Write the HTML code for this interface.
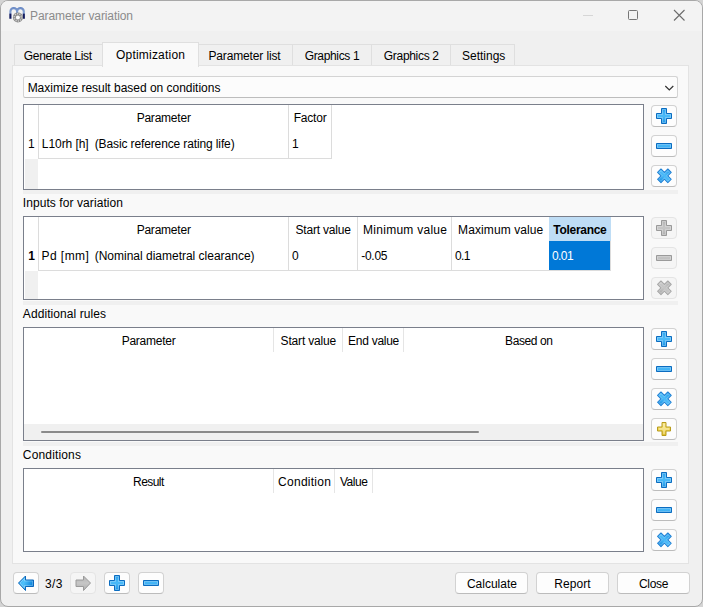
<!DOCTYPE html>
<html>
<head>
<meta charset="utf-8">
<title>Parameter variation</title>
<style>
html,body{margin:0;padding:0;}
body{width:703px;height:607px;overflow:hidden;background:#d4d4d4;position:relative;
 font-family:"Liberation Sans",sans-serif;font-size:12px;color:#000;}
*{box-sizing:border-box;}
.abs{position:absolute;}
#win{position:absolute;left:0;top:0;width:703px;height:607px;background:#f0f0f0;border:1px solid #a8a8a8;border-radius:8px;overflow:hidden;}
#tbar{position:absolute;left:0;top:0;width:701px;height:30px;background:#f3f3f3;}
.t{position:absolute;white-space:nowrap;line-height:14px;height:14px;}
.tab{position:absolute;top:43px;height:23px;background:#f0f0f0;border:1px solid #dfdfdf;border-bottom:none;border-left:none;}
.pane{position:absolute;left:11px;top:64px;width:677px;height:499px;background:#f9f9f9;border:1px solid #e3e3e3;}
.tbl{position:absolute;left:22px;width:621px;background:#fff;border:1px solid #7a7f8b;}
.strip{position:absolute;left:22px;width:655px;height:4px;background:#f0f0f0;}
.btn{position:absolute;width:26px;height:22px;background:#fdfdfd;border:1px solid #d2d2d2;border-bottom-color:#bcbcbc;border-radius:4px;}
.btn.dis{background:#f5f5f5;border-color:#e4e4e4;}
.btn svg{position:absolute;left:3px;top:1px;}
.pbtn{position:absolute;top:571px;height:22px;background:#fdfdfd;border:1px solid #d2d2d2;border-bottom-color:#bcbcbc;border-radius:4px;}
.vl{position:absolute;width:1px;background:#dcdcdc;}
.hl{position:absolute;height:1px;background:#dcdcdc;}
</style>
</head>
<body>
<svg width="0" height="0" style="position:absolute">
<defs>
<linearGradient id="gb" x1="0" y1="0" x2="0" y2="1"><stop offset="0" stop-color="#2a9fec"/><stop offset="0.5" stop-color="#4bbbf9"/><stop offset="1" stop-color="#1b92e4"/></linearGradient>
<linearGradient id="gbh" x1="0" y1="0" x2="1" y2="0.3"><stop offset="0" stop-color="#3bb0f5"/><stop offset="0.45" stop-color="#4fc0fb"/><stop offset="1" stop-color="#0f86dc"/></linearGradient>
<linearGradient id="gg" x1="0" y1="0" x2="0" y2="1"><stop offset="0" stop-color="#b4b4b4"/><stop offset="0.5" stop-color="#c6c6c6"/><stop offset="1" stop-color="#aeaeae"/></linearGradient>
<linearGradient id="gy" x1="0" y1="0" x2="0" y2="1"><stop offset="0.1" stop-color="#f6e384"/><stop offset="0.5" stop-color="#f1d85c"/><stop offset="0.9" stop-color="#e2c235"/></linearGradient>
<g id="iplus"><path d="M6.5 1.5h5v5h5v5h-5v5h-5v-5h-5v-5h5z" stroke-linejoin="round"/><path d="M7.5 2.5h3v5h5v3h-5v5h-3v-5h-5v-3h5z" fill="none" stroke="#fff" stroke-opacity="0.28"/></g>
<g id="iplusy"><path d="M7 2.5h4v4.5h4.5v4h-4.5v4.5h-4v-4.5h-4.5v-4h4.5z" stroke-linejoin="round"/><path d="M9 4v10M4 9h10" fill="none" stroke="#fff" stroke-opacity="0.3" stroke-width="2"/></g>
<g id="iminus"><path d="M1.5 6.5h15v5h-15z" stroke-linejoin="round"/><path d="M2.5 7.5h13v3h-13z" fill="none" stroke="#fff" stroke-opacity="0.28"/></g>
<g id="ix" transform="translate(9.4 8.8) rotate(45) scale(0.97) translate(-9 -9)"><path d="M6.5 1.5h5v5h5v5h-5v5h-5v-5h-5v-5h5z" stroke-linejoin="round"/><path d="M7.5 2.5h3v5h5v3h-5v5h-3v-5h-5v-3h5z" fill="none" stroke="#fff" stroke-opacity="0.2"/></g>
</defs>
</svg>

<div id="win">
 <div id="tbar"></div>
 <!-- app icon -->
 <svg class="abs" style="left:-1px;top:-1px" width="40" height="32" viewBox="0 0 40 32">
  <defs><linearGradient id="gm" gradientUnits="userSpaceOnUse" x1="0" y1="7" x2="0" y2="19"><stop offset="0" stop-color="#6888c4"/><stop offset="0.53" stop-color="#86a4d4"/><stop offset="0.56" stop-color="#131c62"/><stop offset="1" stop-color="#0e175a"/></linearGradient></defs>
  <path d="M10.4 18.7V11.5a3.35 3.35 0 0 1 6.7 0V14M17.1 11.5a3.35 3.35 0 0 1 6.7 0V18.7" fill="none" stroke="url(#gm)" stroke-width="2.15"/>
  <circle cx="17.9" cy="17.4" r="5" fill="#8a8a8a"/>
  <circle cx="17.9" cy="17.4" r="3.6" fill="none" stroke="#d0d0d0" stroke-width="1.6" stroke-dasharray="1.1 1.15"/>
  <circle cx="17.9" cy="17.4" r="2" fill="#fdfdfd"/>
 </svg>
 <div class="t" style="left:29.05px;top:8px;color:#8b8b8b;letter-spacing:-0.098px" id="title">Parameter variation</div>
 <!-- caption buttons -->
 <div class="abs" style="left:582px;top:14px;width:10px;height:1px;background:#d6d6d6"></div>
 <div class="abs" style="left:627px;top:9px;width:10px;height:10px;border:1px solid #767676;border-radius:1.5px"></div>
 <svg class="abs" style="left:672px;top:8px" width="13" height="13" viewBox="0 0 13 13"><path d="M1 1l10.5 10.5M11.5 1L1 11.5" stroke="#6c6c6c" stroke-width="1.1" fill="none"/></svg>

 <!-- tabs -->
 <div class="tab" style="left:13px;width:89px;border-left:1px solid #dfdfdf"></div>
 <div class="tab" style="left:197px;width:95px"></div>
 <div class="tab" style="left:292px;width:79px"></div>
 <div class="tab" style="left:371px;width:79px"></div>
 <div class="tab" style="left:450px;width:64px"></div>
 <div class="pane"></div>
 <div class="tab" style="left:101px;top:41px;width:97px;height:25px;background:#f9f9f9;border-left:1px solid #dfdfdf"></div>
 <div class="t" style="left:22.85px;top:48px;letter-spacing:-0.319px" id="tb1">Generate List</div>
 <div class="t" style="left:114.98px;top:47px;letter-spacing:0.21px" id="tb2">Optimization</div>
 <div class="t" style="left:207.39px;top:48px;letter-spacing:-0.132px" id="tb3">Parameter list</div>
 <div class="t" style="left:303.68px;top:48px;letter-spacing:-0.334px" id="tb4">Graphics 1</div>
 <div class="t" style="left:382.85px;top:48px;letter-spacing:-0.315px" id="tb5">Graphics 2</div>
 <div class="t" style="left:461.07px;top:48px;letter-spacing:-0.013px" id="tb6">Settings</div>

 <!-- combo -->
 <div class="abs" style="left:22px;top:75px;width:655px;height:22px;background:#fcfcfc;border:1px solid #d4d4d4;border-bottom-color:#bdbdbd;border-radius:2.5px"></div>
 <div class="t" style="left:26.64px;top:80px;letter-spacing:-0.02px" id="cb">Maximize result based on conditions</div>
 <svg class="abs" style="left:663px;top:84px" width="11" height="7" viewBox="0 0 11 7"><path d="M1.3 1l4 4l4-4" stroke="#333" stroke-width="1.2" fill="none"/></svg>

 <!-- table 1 -->
 <div class="tbl" style="top:103px;height:86px">
  <div class="abs" style="left:1px;top:54px;width:13px;height:30px;background:#f0f0f0"></div>
  <div class="vl" style="left:14px;top:0;height:54px"></div>
  <div class="vl" style="left:264px;top:0;height:54px"></div>
  <div class="vl" style="left:307px;top:0;height:54px"></div>
  <div class="hl" style="left:14px;top:53px;width:294px"></div>
 </div>
 <div class="t" style="left:135.64px;top:110px;letter-spacing:-0.219px" id="h1a">Parameter</div>
 <div class="t" style="left:292.64px;top:110px;letter-spacing:-0.2px" id="h1b">Factor</div>
 <div class="t" style="left:27px;top:136px" id="r1n">1</div>
 <div class="t" style="left:40.82px;top:136px;letter-spacing:-0.059px" id="r1a">L10rh [h]</div>
 <div class="t" style="left:93.72px;top:136px;letter-spacing:-0.124px" id="r1c">(Basic reference rating life)</div>
 <div class="t" style="left:291px;top:136px" id="r1b">1</div>
 <div class="strip" style="top:189px"></div>
 <div class="btn" style="left:650px;top:104px"><svg width="18" height="18"><use href="#iplus" fill="url(#gb)" stroke="#0b6cc0"/></svg></div>
 <div class="btn" style="left:650px;top:134px"><svg width="18" height="18"><use href="#iminus" fill="url(#gb)" stroke="#0b6cc0"/></svg></div>
 <div class="btn" style="left:650px;top:164px"><svg width="18" height="18"><use href="#ix" fill="url(#gb)" stroke="#2080d4"/></svg></div>

 <!-- table 2 -->
 <div class="t" style="left:21.79px;top:195px;letter-spacing:0.078px" id="l2">Inputs for variation</div>
 <div class="tbl" style="top:215px;height:84px">
  <div class="abs" style="left:1px;top:54px;width:13px;height:28px;background:#f0f0f0"></div>
  <div class="abs" style="left:525px;top:0;width:62px;height:24px;background:#bfddf5"></div>
  <div class="abs" style="left:525px;top:24px;width:61px;height:29px;background:#0078d7"></div>
  <div class="vl" style="left:586px;top:24px;height:30px"></div>
  <div class="vl" style="left:14px;top:0;height:54px"></div>
  <div class="vl" style="left:264px;top:0;height:54px"></div>
  <div class="vl" style="left:333px;top:0;height:54px"></div>
  <div class="vl" style="left:427px;top:0;height:54px"></div>
  <div class="hl" style="left:14px;top:53px;width:573px"></div>
 </div>
 <div class="t" style="left:135.64px;top:222px;letter-spacing:-0.219px" id="h2a">Parameter</div>
 <div class="t" style="left:294.55px;top:222px;letter-spacing:-0.194px" id="h2b">Start value</div>
 <div class="t" style="left:362.12px;top:222px;letter-spacing:0.26px" id="h2c">Minimum value</div>
 <div class="t" style="left:457.12px;top:222px;letter-spacing:0.092px" id="h2d">Maximum value</div>
 <div class="t" style="left:552.29px;top:222px;font-weight:bold;letter-spacing:-0.287px" id="h2e">Tolerance</div>
 <div class="t" style="left:27.2px;top:248px;font-weight:bold" id="r2n">1</div>
 <div class="t" style="left:40.43px;top:248px;letter-spacing:0.469px" id="r2a">Pd [mm]</div>
 <div class="t" style="left:93.72px;top:248px;letter-spacing:-0.008px" id="r2f">(Nominal diametral clearance)</div>
 <div class="t" style="left:290.9px;top:248px" id="r2b">0</div>
 <div class="t" style="left:360.21px;top:248px;letter-spacing:-0.254px" id="r2c">-0.05</div>
 <div class="t" style="left:454px;top:248px;letter-spacing:-0.6px" id="r2d">0.1</div>
 <div class="t" style="left:551px;top:248px;color:#fff;letter-spacing:-0.6px" id="r2e">0.01</div>
 <div class="strip" style="top:300px"></div>
 <div class="btn dis" style="left:650px;top:216px"><svg width="18" height="18"><use href="#iplus" fill="url(#gg)" stroke="#9a9a9a"/></svg></div>
 <div class="btn dis" style="left:650px;top:246px"><svg width="18" height="18"><use href="#iminus" fill="url(#gg)" stroke="#9a9a9a"/></svg></div>
 <div class="btn dis" style="left:650px;top:276px"><svg width="18" height="18"><use href="#ix" fill="url(#gg)" stroke="#a6a6a6"/></svg></div>

 <!-- table 3 -->
 <div class="t" style="left:21.85px;top:306px;letter-spacing:0.07px" id="l3">Additional rules</div>
 <div class="tbl" style="top:326px;height:114px">
  <div class="abs" style="left:0;top:96px;width:619px;height:16px;background:#f0f0f0"></div>
  <div class="abs" style="left:17px;top:103px;width:438px;height:2px;background:#8a8a8a;border-radius:1px"></div>
  <div class="vl" style="left:249px;top:0;height:24px;background:#e5e5e5"></div>
  <div class="vl" style="left:318px;top:0;height:24px;background:#e5e5e5"></div>
  <div class="vl" style="left:379px;top:0;height:24px;background:#e5e5e5"></div>
 </div>
 <div class="t" style="left:120.64px;top:333px;letter-spacing:-0.25px" id="h3a">Parameter</div>
 <div class="t" style="left:279.55px;top:333px;letter-spacing:-0.163px" id="h3b">Start value</div>
 <div class="t" style="left:347.12px;top:333px;letter-spacing:-0.275px" id="h3c">End value</div>
 <div class="t" style="left:504.12px;top:333px;letter-spacing:-0.406px" id="h3d">Based on</div>
 <div class="strip" style="top:441px"></div>
 <div class="btn" style="left:650px;top:327px"><svg width="18" height="18"><use href="#iplus" fill="url(#gb)" stroke="#0b6cc0"/></svg></div>
 <div class="btn" style="left:650px;top:357px"><svg width="18" height="18"><use href="#iminus" fill="url(#gb)" stroke="#0b6cc0"/></svg></div>
 <div class="btn" style="left:650px;top:387px"><svg width="18" height="18"><use href="#ix" fill="url(#gb)" stroke="#2080d4"/></svg></div>
 <div class="btn" style="left:650px;top:417px"><svg width="18" height="18"><use href="#iplusy" fill="url(#gy)" stroke="#b89c1c"/></svg></div>

 <!-- table 4 -->
 <div class="t" style="left:21.85px;top:447px;letter-spacing:0.153px" id="l4">Conditions</div>
 <div class="tbl" style="top:467px;height:84px">
  <div class="vl" style="left:249px;top:0;height:24px;background:#e5e5e5"></div>
  <div class="vl" style="left:310px;top:0;height:24px;background:#e5e5e5"></div>
  <div class="vl" style="left:348px;top:0;height:24px;background:#e5e5e5"></div>
 </div>
 <div class="t" style="left:132.12px;top:474px;letter-spacing:-0.567px" id="h4a">Result</div>
 <div class="t" style="left:277.12px;top:474px;letter-spacing:0.252px" id="h4b">Condition</div>
 <div class="t" style="left:338.93px;top:474px;letter-spacing:-0.446px" id="h4c">Value</div>
 <div class="btn" style="left:650px;top:468px"><svg width="18" height="18"><use href="#iplus" fill="url(#gb)" stroke="#0b6cc0"/></svg></div>
 <div class="btn" style="left:650px;top:498px"><svg width="18" height="18"><use href="#iminus" fill="url(#gb)" stroke="#0b6cc0"/></svg></div>
 <div class="btn" style="left:650px;top:528px"><svg width="18" height="18"><use href="#ix" fill="url(#gb)" stroke="#2080d4"/></svg></div>

 <!-- bottom bar -->
 <div class="btn" style="left:12px;top:571px"><svg width="18" height="18" viewBox="0 0 18 18"><path d="M1.5 9L8.5 2v4h8v6.5H8.5v4z" fill="url(#gbh)" stroke="#0b66ba" stroke-linejoin="round"/><path d="M3 9L7.5 4.5v2.5h8v4.5H7.5v2.5z" fill="none" stroke="#fff" stroke-opacity="0.25"/></svg></div>
 <div class="t" style="left:44.03px;top:576px;letter-spacing:0.391px" id="pg">3/3</div>
 <div class="btn dis" style="left:69px;top:571px"><svg width="18" height="18" viewBox="0 0 18 18"><path d="M16.5 9L9.5 2v4H2v6.5h7.5v4z" fill="url(#gg)" stroke="#9a9a9a" stroke-linejoin="round"/></svg></div>
 <div class="btn" style="left:103px;top:571px"><svg width="18" height="18"><use href="#iplus" fill="url(#gb)" stroke="#0b6cc0"/></svg></div>
 <div class="btn" style="left:137px;top:571px"><svg width="18" height="18"><use href="#iminus" fill="url(#gb)" stroke="#0b6cc0"/></svg></div>

 <div class="pbtn" style="left:454px;width:73px"></div>
 <div class="pbtn" style="left:535px;width:73px"></div>
 <div class="pbtn" style="left:616px;width:73px"></div>
 <div class="t" style="left:465.93px;top:576px;letter-spacing:-0.007px" id="b1">Calculate</div>
 <div class="t" style="left:553.33px;top:576px;letter-spacing:0.037px" id="b2">Report</div>
 <div class="t" style="left:637.97px;top:576px;letter-spacing:-0.285px" id="b3">Close</div>
</div>
</body>
</html>
